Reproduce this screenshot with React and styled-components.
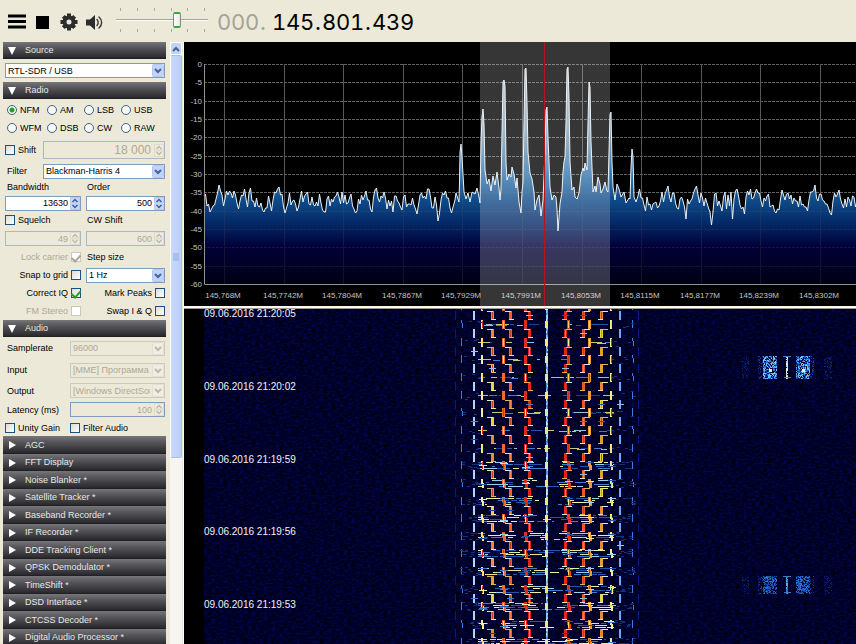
import React from "react";
import styled, { createGlobalStyle, css } from "styled-components";

const Global = createGlobalStyle`
  * { box-sizing: border-box; }
  html, body { margin: 0; background: #ece9d8; overflow: hidden; }
  body, button, input, select { font-family: "Liberation Sans", Arial, sans-serif; font-size: 9px; color: #000; }
`;

const Shell = styled.div`
  display: flex;
  flex-direction: column;
  height: 100vh;
  background: #ece9d8;
`;

const Toolbar = styled.header`
  display: flex;
  align-items: center;
  flex: none;
  height: 42px;
  padding: 2px 0 0 7px;
  gap: 7px;
`;

const IconButton = styled.button`
  display: flex;
  align-items: center;
  justify-content: center;
  width: 19px;
  height: 22px;
  padding: 0;
  border: 0;
  background: none;
`;

const Volume = styled.div`
  display: grid;
  width: 92px;
  height: 26px;
  margin: -4px 0 0 5px;
  > * { grid-area: 1 / 1; }
`;

const VolumeRange = styled.input`
  appearance: none;
  width: 100%;
  height: 26px;
  margin: 0;
  background: linear-gradient(#a5a496 50%, #fff 50%) center / 100% 2px no-repeat;
  &::-webkit-slider-thumb {
    appearance: none;
    width: 8px;
    height: 16px;
    border: 1px solid #7d8b84;
    border-top: 2px solid #2fae3c;
    border-bottom: 2px solid #2fae3c;
    border-radius: 2px;
    background: linear-gradient(90deg, #fff, #e9e8e0);
  }
`;

const Frequency = styled.output`
  display: flex;
  gap: 5px;
  margin-left: 2px;
  font-family: Inter, "Open Sans", sans-serif;
  font-size: 22px;
  font-variant-numeric: tabular-nums;
  line-height: 28px;
`;

const Digits = styled.span`
  display: flex;
  color: ${(p) => (p.$dim ? "#a5a394" : "#000")};
`;

const Digit = styled.span`
  width: ${(p) => (p.$point ? 8 : 14)}px;
  text-align: center;
`;

const Workspace = styled.div`
  display: flex;
  flex: 1;
  min-height: 0;
`;

const Sidebar = styled.aside`
  display: flex;
  flex: none;
  width: 184px;
  overflow: hidden;
  border-right: 1px solid #fff;
`;

const Panels = styled.div`
  flex: none;
  width: 167px;
  padding: 0 1px 0 3px;
`;

const SectionButton = styled.button`
  display: flex;
  align-items: center;
  width: 100%;
  height: ${(p) => (p.$tall ? 18 : 17)}px;
  padding: 0 0 1px 5px;
  gap: 8px;
  border: 0;
  background: linear-gradient(#77777a, #55555a 35%, #2b2b30 90%, #1c1c20);
  color: #e9e9e9;
  text-align: left;
  white-space: nowrap;
`;

const Body = styled.div`
  padding: ${(p) => p.$top || 0}px 1px 0 2px;
`;

const Row = styled.div`
  display: flex;
  align-items: center;
  height: ${(p) => p.$h}px;
  > :nth-child(2) { flex: 1; min-width: 0; }
`;

const RowName = styled.div`
  flex: none;
  width: ${(p) => p.$w}px;
  padding-left: ${(p) => (p.$flush ? 0 : 2)}px;
  white-space: nowrap;
`;

const Pair = styled.div`
  display: grid;
  grid-template-columns: 76px 1fr;
  column-gap: 5px;
  align-items: center;
  height: ${(p) => p.$h}px;
`;

const Modes = styled.div`
  display: grid;
  grid-template-columns: 40px 37px 37px 1fr;
  grid-auto-rows: 18px;
  align-items: center;
  padding-left: 2px;
`;

const Caption = styled.label`
  padding-left: ${(p) => (p.$flush ? 1 : 2)}px;
  line-height: 12px;
  white-space: nowrap;
`;

const TickLabel = styled.label`
  display: flex;
  flex-direction: ${(p) => (p.$end ? "row-reverse" : "row")};
  align-items: center;
  gap: 3px;
  line-height: 12px;
  white-space: nowrap;
  color: ${(p) => (p.$off ? "#aca899" : "#000")};
`;

const Radio = styled.input`
  appearance: none;
  flex: none;
  width: 10px;
  height: 10px;
  margin: 0;
  border: 1px solid #3f6486;
  border-radius: 50%;
  background: #f7f7f3;
  &:checked { background: radial-gradient(circle, #21a121 0 2px, #f7f7f3 3px); }
`;

const Check = styled.input`
  appearance: none;
  flex: none;
  display: flex;
  justify-content: center;
  width: 10px;
  height: 10px;
  margin: 0;
  border: 1px solid #1c5180;
  background: linear-gradient(135deg, #dcdcd7, #fff);
  &:disabled { border-color: #cac8bb; background: #fff; }
  &:checked::before {
    content: "";
    width: 4px;
    height: 7px;
    border: solid #21a121;
    border-width: 0 2px 2px 0;
    transform: rotate(42deg);
  }
  &:disabled:checked::before { border-color: #aca899; }
`;

const boxed = css`
  width: 100%;
  height: ${(p) => p.$h || 15}px;
  margin: 0;
  border: 1px solid ${(p) => (p.disabled ? p.$edge || "#a9b9c2" : "#7f9db9")};
  border-radius: 0;
  background: ${(p) => (p.disabled ? "#ece9d8" : "#fff")};
  color: ${(p) => (p.disabled ? "#aca899" : "#000")};
  opacity: 1;
`;

const Field = styled.div`
  display: grid;
  align-items: center;
  > * { grid-area: 1 / 1; }
  > svg { justify-self: end; margin-right: 1px; pointer-events: none; }
`;

const SelectBox = styled.select`
  ${boxed}
  appearance: none;
  padding: 0 14px 0 2px;
`;

const NumberBox = styled.input`
  ${boxed}
  padding: 0 12px 0 2px;
  text-align: right;
  ${(p) => p.$large && css`font-size: 12px; padding-right: 13px;`}
`;

const ScrollTrack = styled.div`
  display: flex;
  flex-direction: column;
  width: 12px;
  margin-left: 3px;
  background: #f6f5ef;
`;

const ScrollUp = styled.button`
  display: flex;
  align-items: center;
  justify-content: center;
  flex: none;
  height: 13px;
  padding: 0;
  border: 1px solid #fff;
  border-radius: 2px;
  background: #c3d3fd;
`;

const ScrollThumb = styled.div`
  display: flex;
  align-items: center;
  justify-content: center;
  flex: 0 0 67%;
  border: 1px solid #a9bdf0;
  border-left-color: #fff;
  border-radius: 2px;
  background: linear-gradient(90deg, #cbd9fe, #bccdfb);
`;

const Displays = styled.main`
  display: flex;
  flex: 1;
  flex-direction: column;
  min-width: 0;
  background: #000;
`;

const SpectrumView = styled.svg`
  display: block;
  flex: none;
  width: 100%;
  height: 264px;
  font-family: "Liberation Sans", Arial, sans-serif;
  font-size: 8px;
`;

const Splitter = styled.div`
  flex: none;
  height: 3px;
  border-bottom: 1px solid #9c9a90;
  background: #fff8ee;
`;

const WaterfallView = styled.svg`
  display: block;
  flex: 1;
  width: 100%;
  min-height: 0;
  font-family: "Liberation Sans", Arial, sans-serif;
  font-size: 10px;
`;

function Chevron({ off }) {
  return (
    <svg width="12" height="13" viewBox="0 0 12 13" aria-hidden="true">
      <rect x="0.5" y="0.5" width="11" height="12" rx="1" fill={off ? "#f0eee4" : "#c3d3fd"} stroke={off ? "#e2dfd0" : "#b4c6f4"} />
      <path d="M3 5l3 3 3-3" fill="none" stroke={off ? "#bdbaa9" : "#46648c"} strokeWidth="2" />
    </svg>
  );
}

function SpinArrows({ off }) {
  const fill = off ? "#efede2" : "#c9d8fc";
  const edge = off ? "#dedbcc" : "#b4c6f4";
  return (
    <svg width="10" height="13" viewBox="0 0 10 13" aria-hidden="true">
      <path d="M0.500 0.500h9v5.500h-9zM0.500 7h9v5.500h-9z" fill={fill} stroke={edge} />
      <path d="M2.500 5L5 2.500 7.500 5M2.500 8L5 10.500 7.500 8" fill="none" stroke={off ? "#bdbaa9" : "#3f5f92"} strokeWidth="1.500" />
    </svg>
  );
}

function Select({ id, label, value, off }) {
  return (
    <Field>
      <SelectBox id={id} aria-label={label} disabled={off} $edge="#cdcabb" defaultValue={value}>
        <option>{value}</option>
      </SelectBox>
      <Chevron off={off} />
    </Field>
  );
}

function Spin({ id, label, value, off, large, edge }) {
  return (
    <Field>
      <NumberBox id={id} aria-label={label} defaultValue={value} disabled={off} $large={large} $h={large ? 18 : 15} $edge={edge} />
      <SpinArrows off={off} />
    </Field>
  );
}

function Tick({ label, end, off, checked }) {
  return (
    <TickLabel $end={end} $off={off}>
      <Check type="checkbox" disabled={off} defaultChecked={checked} />
      {label}
    </TickLabel>
  );
}

function Section({ title, open, tall }) {
  return (
    <SectionButton $tall={tall} aria-expanded={!!open}>
      <svg width="9" height="9" viewBox="0 0 9 9" aria-hidden="true">
        <path d={open ? "M0 1h8L4 9z" : "M1 1v8l7-4z"} fill="#fff" />
      </svg>
      {title}
    </SectionButton>
  );
}

function randomizer(seed) {
  let s = seed;
  return () => {
    s = (s * 1664525 + 1013904223) >>> 0;
    return s / 4294967296;
  };
}

const DRAW_WIDTH = 1800;
const GRID_STEP = 59.6;
const LABELS = ["145,768M", "145,7742M", "145,7804M", "145,7867M", "145,7929M", "145,7991M", "145,8053M", "145,8115M", "145,8177M", "145,8239M", "145,8302M"];

const CARRIERS = [
  [271, 158], [272, 151], [275, 160], [275.500, 140], [276, 110], [277, 102], [278, 115], [280, 150],
  [282, 157], [284, 151], [286, 160], [288, 150], [291, 152], [293, 146], [295, 155], [296, 161],
  [297, 100], [298, 75], [299, 67], [300, 82], [301, 128], [303, 142], [305, 137], [307, 149], [309, 134], [311, 143], [313, 130],
  [315, 146], [316, 158], [317, 147], [318, 90], [319, 40], [320, 38], [321, 44], [322, 120],
  [323, 138], [325, 132], [327, 135], [328, 125], [330, 132], [332, 146], [333, 136], [335, 160], [337, 171],
  [338, 150], [339, 140], [340, 80], [341, 27], [342, 26], [343, 60], [344, 110], [346, 131], [348, 137], [350, 150],
  [351, 168], [353, 158], [355, 153], [357, 174], [359, 158], [361, 110], [362, 68], [363, 65], [364, 95],
  [366, 145], [368, 158], [370, 153], [372, 155], [373, 168], [374, 189], [376, 162], [378, 150], [379, 130], [380, 120],
  [381, 115], [382, 80], [383, 27], [384, 25], [385, 55], [386, 120], [388, 148], [390, 145], [391, 155], [393, 157],
  [395, 151], [397, 133], [399, 126], [400, 129], [401, 121], [403, 128], [404, 80], [405, 40], [406, 45],
  [407, 100], [409, 150], [411, 144], [412, 150], [414, 135], [416, 142], [417, 151], [419, 147], [421, 140], [423, 149],
  [424, 150], [425, 110], [426, 72], [427, 70], [428, 120], [429, 145], [431, 158], [433, 142], [435, 147], [437, 155], [440, 150],
  [442, 161], [445, 156], [446, 157], [447, 125], [448, 107], [449, 115], [450, 155], [452, 160],
];

function buildTrace() {
  const rand = randomizer(71);
  const noise = (from, to) => {
    const list = [];
    let drift = 0;
    for (let x = from; x < to; x += 1.500) {
      drift = drift * 0.5 + (rand() - 0.5) * 20;
      let y = 158 + drift + (rand() - 0.5) * 4;
      if (rand() > 0.985) y += 12;
      list.push([x, Math.round(y)]);
    }
    return list;
  };
  return [...noise(20, 270), ...CARRIERS, ...noise(454, DRAW_WIDTH)].map(([x, y]) => `${x},${y}`).join(" ");
}

const TRACE = buildTrace();

function GridLines({ faint }) {
  const rows = Array.from({ length: 12 }, (_, i) => Math.round(22 + (i * 220) / 12) + 0.5);
  const cols = Array.from({ length: 30 }, (_, i) => Math.round(40 + i * GRID_STEP) + 0.5);
  return (
    <g opacity={faint ? 0.22 : 1} fill="none">
      <path d={rows.map((y) => `M20 ${y}H${DRAW_WIDTH}`).join("")} stroke="#626262" strokeDasharray="3 1" />
      <path d={cols.map((x) => `M${x} 22V242`).join("")} stroke="#585858" />
    </g>
  );
}

function Spectrum() {
  return (
    <SpectrumView role="img" aria-label="Spectrum">
      <defs>
        <linearGradient id="level" gradientUnits="userSpaceOnUse" x1="0" y1="22" x2="0" y2="242">
          <stop offset="0" stopColor="#b8b8b8" />
          <stop offset="0.3" stopColor="#8aa4b8" />
          <stop offset="0.5" stopColor="#3377ae" />
          <stop offset="0.62" stopColor="#0f4a88" />
          <stop offset="0.72" stopColor="#042a68" />
          <stop offset="0.83" stopColor="#000038" />
          <stop offset="1" stopColor="#000014" />
        </linearGradient>
      </defs>
      <GridLines />
      <polygon points={`20,242 ${TRACE} ${DRAW_WIDTH},242`} fill="url(#level)" />
      <GridLines faint />
      <polyline points={TRACE} fill="none" stroke="#e8f1f6" strokeWidth="1" />
      <path d={`M20.500 22V242.500H${DRAW_WIDTH}`} fill="none" stroke="#929292" />
      <g fill="#c4c4c4" textAnchor="end">
        {Array.from({ length: 13 }, (_, i) => (
          <text key={i} x="18" y={Math.round(25 + (i * 220) / 12)}>{i ? -5 * i : 0}</text>
        ))}
      </g>
      <g fill="#c4c4c4" textAnchor="middle">
        {LABELS.map((label, i) => (
          <text key={label} x={Math.round(39 + i * GRID_STEP)} y="256">{label}</text>
        ))}
      </g>
      <rect x="296" y="0" width="130" height="264" fill="#fff" opacity="0.21" />
      <path d="M360.500 0V264" stroke="#b5161c" strokeWidth="1" />
    </SpectrumView>
  );
}

const FALL_HEIGHT = 1000;
const PERIOD = 17.65;
const EVEN = [[277, "#3d7be0", 1], [298, "#e9ef9c", 2], [319, "#f06a30", 3], [341, "#e42a1c", 3], [384, "#ea3c1c", 3], [405, "#f09a38", 3], [427, "#eef08a", 2], [448, "#3d7be0", 1]];
const ODD = [[271, "#0a1a78", 1], [289, "#a9d5ff", 2], [307, "#e7ae2c", 3], [325, "#f2602a", 3], [344, "#e02218", 3], [380, "#e02218", 3], [398, "#ee5528", 3], [416, "#e3a735", 3], [435, "#6da9f5", 2], [454, "#0a1a78", 1]];
const SPARKS = ["#eaf2a8", "#9cd0f2", "#3d7fce", "#2455aa", "#2455aa", "#f4e58a"];
const DIM_SPARKS = ["#2455aa", "#173f94", "#3d7fce", "#8fc0e0", "#c9c774"];

function buildFall() {
  const rand = randomizer(2016);
  const out = [];
  const add = (x, y, w, h, fill) => out.push({ x, y, w, h, fill });
  const pick = (list) => list[Math.floor(rand() * list.length)];

  for (let y = 0; y < FALL_HEIGHT; y += 2) {
    add(362, y, 1, 2, pick(["#8dc8f5", "#c7e9fa", "#4d93e0"]));
    add(363, y, 1, 2, pick(["#5aa3ea", "#a4d8f8", "#2f6cc0"]));
  }

  for (let n = -1; n * PERIOD < FALL_HEIGHT; n += 1) {
    const mid = Math.round(15 + n * PERIOD);
    const top = mid - 4;
    const busy = n >= 8;

    const lines = busy ? [-3, -1, 1, 3] : [0, 1];
    lines.forEach((dy, row) => {
      const quiet = !busy && row === 1;
      let x = 294;
      while (x < 430) {
        const len = 2 + Math.floor(rand() * (busy ? 14 : 12));
        const nearCentre = x > 350 && x < 374;
        if (rand() > (quiet ? 0.75 : 0.4) + (nearCentre ? 0.3 : 0)) {
          add(x, mid + dy, Math.min(len, 430 - x), 1, pick(busy ? SPARKS : DIM_SPARKS));
        }
        x += len + Math.floor(rand() * 4);
      }
    });

    EVEN.forEach(([x, fill, w]) => {
      if (w === 1) {
        add(x, top, 1, 3, fill);
        add(x + Math.round(rand()), top + 3, 1, 5, fill);
        return;
      }
      add(x - 1, top, w, 5, fill);
      add(x - 1 + (busy ? 1 : 0), top + 4, w, 5, fill);
      add(x, top + 1, 1, 7, pick(["#ffd45c", "#d92a1a", "#ffef9c", fill]));
      if (busy) add(x - 3, top + 1 + Math.floor(rand() * 6), 8, 1, pick(SPARKS));
    });

    ODD.forEach(([x, base, w]) => {
      const gold = x === 307 || x === 416;
      const fill = gold ? pick(["#e2a034", "#e8d63c", "#e78a33"]) : base;
      add(x, top + 9, w, 9, fill);
      if (w === 3) {
        add(x + 1, top + 10, 1, 7, pick(["#ff8040", "#c8401c", fill]));
        const left = x < 362;
        const color = pick(["#f0e79a", "#cfe4ee", "#e9b05a"]);
        add(left ? x - 4 : x + 2, top + 9, 6, 1, color);
        add(left ? x : x - 2, top + 17, 5, 1, color);
      }
      if (w > 1 && rand() > 0.8) add(x - 2, top + 13, 7, 1, pick(DIM_SPARKS));
    });
    add(361, top + 1, 3, 7, pick(["#e4ea7c", "#d8e9b8", "#f3ed72"]));

    for (let i = 0; i < (busy ? 10 : 3); i += 1) {
      add(276 + Math.floor(rand() * 20), mid - 4 + Math.floor(rand() * 9), 3, 1, "#12307c");
      add(430 + Math.floor(rand() * 20), mid - 4 + Math.floor(rand() * 9), 3, 1, "#12307c");
    }
  }

  const burst = (top, height, light) => {
    const cloud = (from, to, density, colors) => {
      for (let x = from; x < to; x += 1) {
        for (let y = 0; y < height; y += 1) if (rand() < density) add(x, top + y, 1, 1, pick(colors));
      }
    };
    const bright = light ? ["#63b4f5", "#1c5fc8", "#2d86e4", "#0d3aa0", "#8cc8f2"] : ["#2f78cc", "#164da8", "#1c5cc0", "#0b2b80"];
    cloud(558, 565, 0.3, ["#071a70", "#08216f"]);
    cloud(574, 579, 0.3, ["#0b2580", "#14409c"]);
    cloud(579, 593, 0.72, bright);
    cloud(602, 604, 0.88, light ? ["#9fd8f8", "#e4f7e8"] : ["#2c76cc", "#5ca8e6"]);
    cloud(612, 626, 0.72, bright);
    cloud(626, 630, 0.28, ["#0b2580", "#14409c"]);
    cloud(640, 648, 0.28, ["#071a70", "#08216f"]);
    if (light) {
      add(585, top + 13, 3, 3, "#d4f1f5");
      add(618, top + 13, 3, 3, "#d4f1f5");
    }
    add(599, top, 8, 1, "#3a7cc4");
    add(600, top + height - 2, 7, 1, "#3a7cc4");
  };
  burst(47, 23, true);
  burst(267, 18, false);
  return out;
}

const FALL = buildFall();
const STAMPS = ["09.06.2016 21:20:05", "09.06.2016 21:20:02", "09.06.2016 21:19:59", "09.06.2016 21:19:56", "09.06.2016 21:19:53"];

function Waterfall() {
  return (
    <WaterfallView role="img" aria-label="Waterfall">
      <defs>
        <filter id="grain" x="0" y="0" width="100%" height="100%" colorInterpolationFilters="sRGB">
          <feTurbulence type="fractalNoise" baseFrequency="0.25 0.5" numOctaves="2" seed="4" />
          <feColorMatrix values="0 0 0 0 0  0.06 0 0 0 -0.025  0.5 0 0 0 -0.08  0 0 0 0 1" />
        </filter>
      </defs>
      <rect x="20" y="0" width="100%" height="100%" filter="url(#grain)" />
      <g shapeRendering="crispEdges">
        {FALL.map((r, i) => (
          <rect key={i} x={r.x} y={r.y} width={r.w} height={r.h} fill={r.fill} />
        ))}
      </g>
      <g fill="#f2f2f2">
        {STAMPS.map((stamp, i) => (
          <text key={stamp} x="20" y={Math.round(8 + i * 72.75)}>{stamp}</text>
        ))}
      </g>
    </WaterfallView>
  );
}

const MODES = ["NFM", "AM", "LSB", "USB", "WFM", "DSB", "CW", "RAW"];
const PLUGINS = ["AGC", "FFT Display", "Noise Blanker *", "Satellite Tracker *", "Baseband Recorder *", "IF Recorder *", "DDE Tracking Client *", "QPSK Demodulator *", "TimeShift *", "DSD Interface *", "CTCSS Decoder *", "Digital Audio Processor *"];

function RadioPanel() {
  return (
    <Body $top={2}>
      <Modes role="radiogroup" aria-label="Mode">
        {MODES.map((mode) => (
          <TickLabel key={mode}>
            <Radio type="radio" name="mode" defaultChecked={mode === "NFM"} />
            {mode}
          </TickLabel>
        ))}
      </Modes>
      <Row $h={26}>
        <RowName $w={38} $flush><Tick label="Shift" /></RowName>
        <Spin label="Shift amount" value="18 000" off large />
      </Row>
      <Row $h={16}>
        <RowName $w={38}><label htmlFor="filter">Filter</label></RowName>
        <Select id="filter" value="Blackman-Harris 4" />
      </Row>
      <Pair $h={16}>
        <Caption htmlFor="bandwidth">Bandwidth</Caption>
        <Caption htmlFor="order" $flush>Order</Caption>
      </Pair>
      <Pair $h={16}>
        <Spin id="bandwidth" value="13630" />
        <Spin id="order" value="500" />
      </Pair>
      <Pair $h={18}>
        <Tick label="Squelch" />
        <Caption htmlFor="cwshift" $flush>CW Shift</Caption>
      </Pair>
      <Pair $h={19}>
        <Spin label="Squelch level" value="49" off />
        <Spin id="cwshift" value="600" off />
      </Pair>
      <Pair $h={18}>
        <Tick label="Lock carrier" end off checked />
        <Caption htmlFor="step" $flush>Step size</Caption>
      </Pair>
      <Pair $h={18}>
        <Tick label="Snap to grid" end />
        <Select id="step" value="1 Hz" />
      </Pair>
      <Pair $h={18}>
        <Tick label="Correct IQ" end checked />
        <Tick label="Mark Peaks" end />
      </Pair>
      <Pair $h={18}>
        <Tick label="FM Stereo" end off />
        <Tick label="Swap I & Q" end />
      </Pair>
    </Body>
  );
}

function AudioPanel() {
  return (
    <Body>
      <Row $h={22}>
        <RowName $w={65}><label htmlFor="rate">Samplerate</label></RowName>
        <Select id="rate" value="96000" off />
      </Row>
      <Row $h={22}>
        <RowName $w={65}><label htmlFor="input">Input</label></RowName>
        <Select id="input" value="[MME] Программа переназначения" off />
      </Row>
      <Row $h={19}>
        <RowName $w={65}><label htmlFor="output">Output</label></RowName>
        <Select id="output" value="[Windows DirectSound]" off />
      </Row>
      <Row $h={19}>
        <RowName $w={65}><label htmlFor="latency">Latency (ms)</label></RowName>
        <Spin id="latency" value="100" off edge="#7f9db9" />
      </Row>
      <Row $h={17}>
        <RowName $w={65} $flush><Tick label="Unity Gain" /></RowName>
        <Tick label="Filter Audio" />
      </Row>
    </Body>
  );
}

function DigitRun({ text, dim }) {
  return (
    <Digits $dim={dim}>
      {[...text].map((char, i) => (
        <Digit key={i} $point={char === "."}>{char}</Digit>
      ))}
    </Digits>
  );
}

const TICKS = [4, 21, 38, 55, 71, 88];

export default function App() {
  return (
    <>
      <Global />
      <Shell>
        <Toolbar>
          <IconButton aria-label="Menu">
            <svg width="19" height="16" viewBox="0 0 19 16">
              <path d="M1 0.500h18v3H1zM1 6h18v3H1zM1 11.500h18v3H1z" />
            </svg>
          </IconButton>
          <IconButton aria-label="Stop">
            <svg width="13" height="13" viewBox="0 0 13 13"><path d="M0 0h13v13H0z" /></svg>
          </IconButton>
          <IconButton aria-label="Settings">
            <svg width="18" height="18" viewBox="-9 -9 18 18">
              <g stroke="#2c2c2c" strokeWidth="4">
                <path d="M0-8.500V-4M0 4V8.500M-8.500 0H-4M4 0H8.500" />
                <path d="M-5.700-5.700L-3-3M3 3L5.700 5.700M-5.700 5.700L-3 3M3-3L5.700-5.700" />
              </g>
              <circle r="4.500" fill="none" stroke="#2c2c2c" strokeWidth="4" />
            </svg>
          </IconButton>
          <IconButton aria-label="Mute">
            <svg width="19" height="17" viewBox="0 0 19 17">
              <path d="M1 5.500h4l5-4.500v15l-5-4.500H1z" fill="#2c2c2c" />
              <path d="M12 5.500c1.500 1.500 1.500 4.500 0 6M14 3c3.500 3 3.500 8 0 11" fill="none" stroke="#3c3c3c" strokeWidth="1.500" strokeLinecap="round" />
            </svg>
          </IconButton>
          <Volume>
            <svg width="92" height="26" aria-hidden="true">
              <path d={TICKS.map((x) => `M${x}.5 1v3M${x}.5 22v3`).join("")} stroke="#aaa899" />
            </svg>
            <VolumeRange type="range" min="0" max="100" defaultValue="68" aria-label="Volume" />
          </Volume>
          <Frequency aria-label="Frequency">
            <DigitRun text="000." dim />
            <DigitRun text="145.801.439" />
          </Frequency>
        </Toolbar>
        <Workspace>
          <Sidebar>
            <Panels>
              <Section title="Source" open />
              <Body>
                <Row $h={23}>
                  <RowName $w={0} $flush />
                  <Select label="Source" value="RTL-SDR / USB" />
                </Row>
              </Body>
              <Section title="Radio" open />
              <RadioPanel />
              <Section title="Audio" open />
              <AudioPanel />
              {PLUGINS.map((name, i) => (
                <Section key={name} title={name} tall={i % 2 === 0} />
              ))}
            </Panels>
            <ScrollTrack>
              <ScrollUp aria-label="Scroll up">
                <svg width="8" height="6" viewBox="0 0 8 6"><path d="M1 5l3-3 3 3" fill="none" stroke="#46648c" strokeWidth="2" /></svg>
              </ScrollUp>
              <ScrollThumb>
                <svg width="6" height="8" viewBox="0 0 6 8"><path d="M0 1h6M0 3h6M0 5h6M0 7h6" stroke="#8fa8ea" /></svg>
              </ScrollThumb>
            </ScrollTrack>
          </Sidebar>
          <Displays>
            <Spectrum />
            <Splitter />
            <Waterfall />
          </Displays>
        </Workspace>
      </Shell>
    </>
  );
}
